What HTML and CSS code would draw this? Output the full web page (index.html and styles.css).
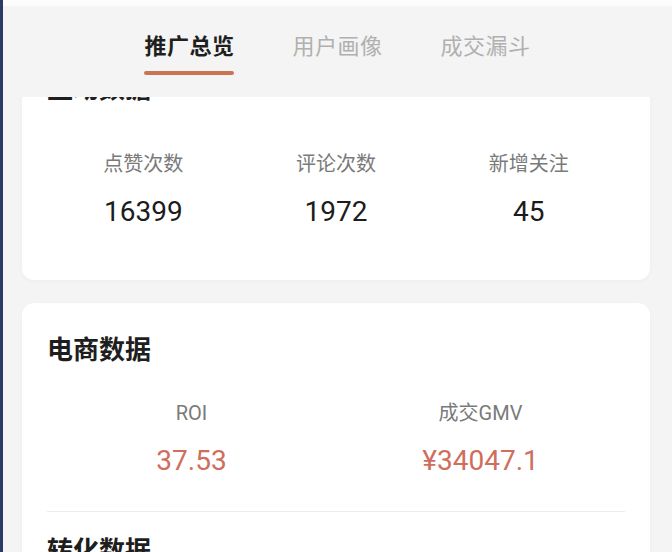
FILE: index.html
```html
<!DOCTYPE html>
<html lang="zh-CN">
<head>
    <meta charset="UTF-8">
    <title>推广总览</title>
    <link rel="stylesheet" href="styles.css">
</head>
<body>
<div class="g-top"></div>
<div class="g-header">
    <ul class="m-tabs">
        <li class="z-active">推广总览</li>
        <li>用户画像</li>
        <li>成交漏斗</li>
    </ul>
</div>
<div class="g-view">
    <div class="g-list">
        <!--互动数据 被顶部栏遮住一部分-->
        <div class="m-card m-card-first">
            <h3 class="u-title">互动数据</h3>
            <ul class="m-stats m-stats-3">
                <li>
                    <p class="u-label">点赞次数</p>
                    <p class="u-value">16399</p>
                </li>
                <li>
                    <p class="u-label">评论次数</p>
                    <p class="u-value">1972</p>
                </li>
                <li>
                    <p class="u-label">新增关注</p>
                    <p class="u-value">45</p>
                </li>
            </ul>
        </div>
        <!--电商数据-->
        <div class="m-card">
            <h3 class="u-title">电商数据</h3>
            <ul class="m-stats m-stats-2">
                <li>
                    <p class="u-label">ROI</p>
                    <p class="u-value u-value-hot">37.53</p>
                </li>
                <li>
                    <p class="u-label">成交GMV</p>
                    <p class="u-value u-value-hot">¥34047.1</p>
                </li>
            </ul>
            <div class="u-line"></div>
            <h3 class="u-title u-title-sub">转化数据</h3>
        </div>
    </div>
</div>
</body>
</html>
```

FILE: styles.css
```css
* {
    padding: 0;
    margin: 0;
}
ul {
    list-style: none;
}
html, body {
    height: 100%;
    overflow: hidden;
}
body {
    background-color: #f4f4f4;
    border-left: 3px solid #2c3a64;
    font-family: "Roboto", "Noto Sans CJK SC", sans-serif;
    color: #222;
}
.g-top {
    height: 6px;
    background-color: #fbfcfc;
}
.g-header {
    padding: 26px 0 22px;
    background-color: #f4f4f4;
}
.m-tabs {
    display: flex;
    justify-content: center;
    gap: 58px;
}
.m-tabs li {
    font-size: 22px;
    line-height: 30px;
    letter-spacing: 0.5px;
    color: #b0b0b0;
}
.m-tabs li::after {
    content: "";
    display: block;
    height: 4px;
    margin-top: 9px;
    border-radius: 2px;
}
.m-tabs .z-active {
    color: #1f1f1f;
    font-weight: bold;
}
.m-tabs .z-active::after {
    background-color: #c97454;
}

.g-view {
    height: 455px;
    overflow: hidden;
}
.g-list {
    padding: 0 22px 0 19px;
}
.m-card {
    background-color: #fff;
    border-radius: 12px;
    padding: 32px 25px 50px;
    box-shadow: 0 1px 4px rgba(0, 0, 0, 0.03);
}
.m-card-first {
    margin-top: -55px;
    margin-bottom: 23px;
    padding-bottom: 50px;
}
.u-title {
    font-size: 26px;
    line-height: 31px;
    font-weight: bold;
    color: #1e1e1e;
}
.u-title-sub {
    margin-top: 24px;
}
.m-stats {
    display: grid;
    text-align: center;
    margin-top: 33px;
}
.m-card-first .m-stats {
    margin-top: 45px;
}
.m-stats-3 {
    grid-template-columns: repeat(3, 1fr);
}
.m-stats-2 {
    grid-template-columns: repeat(2, 1fr);
}
.u-label {
    font-size: 20px;
    line-height: 28px;
    color: #7a7a7a;
}
.u-value {
    margin-top: 16px;
    font-size: 28px;
    line-height: 36px;
    color: #1c1c1c;
}
.u-value-hot {
    color: #cf6e5c;
}
.u-line {
    height: 1px;
    margin-top: 32px;
    background-color: #ececec;
}
```
